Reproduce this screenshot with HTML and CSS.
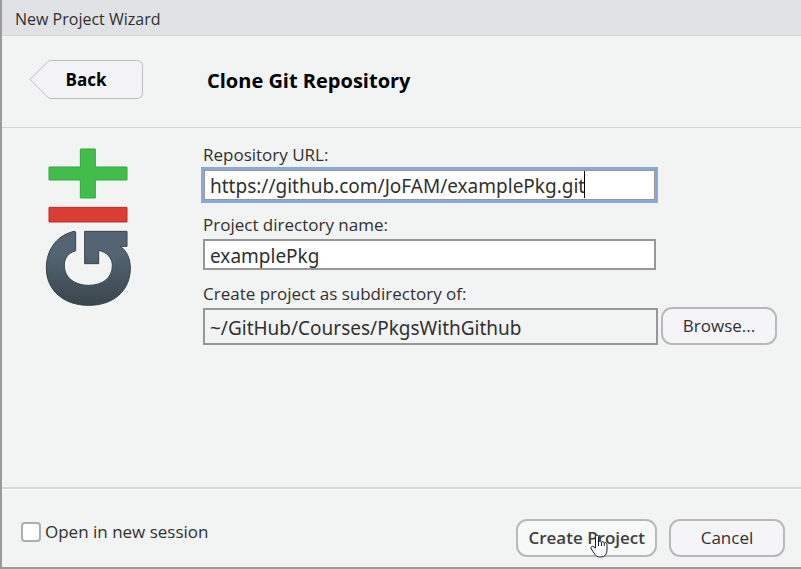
FILE: index.html
```html
<!DOCTYPE html>
<html lang="en">
<head>
<meta charset="utf-8">
<title>New Project Wizard</title>
<link rel="stylesheet" href="styles.css">
</head>
<body>
<form class="wizard">
  <div class="titlebar">New Project Wizard</div>
  <header class="header">
    <button type="button" class="back">
      <svg class="back-shape" viewBox="0 0 114 40" aria-hidden="true">
        <path d="M1 19.5 19 1.5Q20 .5 22 .5H107.500Q113.500 .5 113.500 6.500V32.500Q113.500 38.500 107.500 38.500H22Q20 38.500 19 37.500Z"/>
      </svg>
      <span class="back-label">Back</span>
    </button>
    <h1 class="heading">Clone Git Repository</h1>
  </header>
  <main class="content">
    <svg class="logo" viewBox="45 36 261 480" role="img" aria-label="Git">
      <defs>
        <linearGradient id="slate" x1="0" y1="0" x2="0" y2="1">
          <stop offset="0.3" stop-color="#546472"/>
          <stop offset="1" stop-color="#3a454d"/>
        </linearGradient>
      </defs>
      <path class="plus" d="M151 42H196V96H291V135H196V189H151V135H57V96H151Z"/>
      <path class="minus" d="M57 217H291V261H57Z"/>
      <path class="letter" fill="url(#slate)" d="M137 291C135 288 130 289 125 291C77 305 49 347 49 399C49 466 101 511 176 511C251 511 301 467 301 399C301 370 290 348 271 334H291V289H164V386H206V346C232 352 247 369 247 392C247 429 217 451 176 451C134 451 103 428 103 391C103 367 117 353 137 347Z"/>
    </svg>
    <div class="fields">
      <div class="field">
        <label for="url">Repository URL:</label>
        <div class="control">
          <input class="text active" id="url" type="text" value="https://github.com/JoFAM/examplePkg.git">
          <span class="caret"></span>
        </div>
      </div>
      <div class="field">
        <label for="name">Project directory name:</label>
        <div class="control">
          <input class="text" id="name" type="text" value="examplePkg">
        </div>
      </div>
      <div class="field">
        <label for="parent">Create project as subdirectory of:</label>
        <div class="browse-row">
          <input class="text tall" id="parent" type="text" value="~/GitHub/Courses/PkgsWithGithub" readonly>
          <button type="button" class="button">Browse...</button>
        </div>
      </div>
    </div>
  </main>
  <footer class="footer">
    <label class="session"><input type="checkbox" class="check">Open in new session</label>
    <div class="actions">
      <button type="button" class="button primary">Create Project
        <svg class="pointer" viewBox="0 0 18 24" aria-hidden="true">
          <path d="M5.500 14V2.500Q5.500 1 7 1T8.500 2.500V8Q9 6.800 10.200 7T11.500 8.500Q12 7.500 13 7.700T14.300 9.200Q15 8.300 16 8.700T17 10.500V16Q17 19 15.500 21T11 23H9.500Q6.500 23 5 20.500L1.300 15Q.5 13.500 1.500 12.700T4 13Z"/>
          <path d="M8.500 8V12M11.500 8.500V12M14.300 9.200V12"/>
        </svg>
      </button>
      <button type="button" class="button">Cancel</button>
    </div>
  </footer>
</form>
</body>
</html>
```
FILE: styles.css
```css
* {
  box-sizing: border-box;
}

body {
  margin: 0;
  background: #f2f4f4;
  color: #303030;
  font: 17px/24px "Open Sans", "Noto Sans", sans-serif;
}

.wizard {
  display: flex;
  flex-direction: column;
  min-height: 100vh;
  border-left: 2px solid #9a9a9a;
  border-bottom: 2px solid #9a9a9a;
}

.titlebar {
  height: 36px;
  padding: 0 13px;
  background: #e0e2e6;
  border-bottom: 1px solid #d4d6d9;
  font-size: 16px;
  line-height: 38px;
}

.header {
  display: flex;
  align-items: center;
  gap: 64px;
  height: 92px;
  padding: 0 27px 4px;
  border-bottom: 1px solid #d3d5d5;
}

.back {
  position: relative;
  width: 114px;
  height: 40px;
  padding: 0;
  border: 0;
  background: none;
  color: #000;
  font: bold 17px/40px "Open Sans", "Noto Sans", sans-serif;
}

.back-shape {
  position: absolute;
  inset: 0;
  fill: #f3f3f6;
  stroke: #bdbdbf;
}

.back-label {
  position: relative;
}

.heading {
  margin: 0;
  color: #000;
  font-size: 20px;
  line-height: 28px;
  padding-top: 2px;
}

.content {
  display: flex;
  flex: 1;
  align-items: flex-start;
  gap: 71px;
  padding: 15px 24px 15px 43px;
}

.logo {
  flex: none;
  width: 87px;
  height: 160px;
  margin-top: 4px;
  stroke-width: 3;
}

.plus {
  fill: #42bd4c;
  stroke: #2eab38;
}

.minus {
  fill: #d93d34;
  stroke: #bd2d26;
}

.letter {
  stroke: #38434c;
}

.fields {
  display: flex;
  flex: 1;
  flex-direction: column;
  gap: 12px;
}

.field label {
  display: block;
  padding-bottom: 2px;
  line-height: 24px;
}

.control {
  position: relative;
  margin-right: 121px;
}

.text {
  display: block;
  width: 100%;
  height: 31px;
  padding: 2px 5px 0;
  border: 2px solid #979797;
  border-radius: 0;
  outline: 0;
  background: #fff;
  color: #303030;
  font: 19px/25px "Noto Sans", "Open Sans", sans-serif;
}

.active {
  height: 32px;
  padding: 2px 6px 0;
  border: 1px solid #8aa8dc;
  box-shadow: inset 0 0 0 1px #979797, 0 0 0 2px #8aa8dc;
}

.caret {
  position: absolute;
  top: 2px;
  left: 381px;
  width: 1px;
  height: 27px;
  background: #000;
}

.browse-row {
  display: flex;
  align-items: flex-end;
  gap: 3px;
  margin-top: -1px;
}

.tall {
  flex: 1;
  height: 37px;
  background: #f2f4f4;
}

.button {
  position: relative;
  min-width: 116px;
  height: 38px;
  padding: 0 10px;
  border: 2px solid #b9b9bb;
  border-radius: 11px;
  background: #f5f5f8;
  color: #303030;
  font: 17px/34px "Open Sans", "Noto Sans", sans-serif;
}

.browse-row .button {
  align-self: flex-start;
}

.primary {
  background: #f7f9f9;
  color: #404040;
  font-weight: 600;
}

.pointer {
  position: absolute;
  top: 13px;
  left: 72px;
  width: 18px;
  height: 24px;
  fill: #fff;
  stroke: #1d1d30;
}

.footer {
  display: flex;
  align-items: center;
  justify-content: space-between;
  height: 80px;
  padding: 20px 16px 0 19px;
  border-top: 2px solid #d6d8d8;
  box-shadow: inset 0 1px #fff;
}

.session {
  display: flex;
  align-items: center;
  gap: 4px;
  padding-bottom: 12px;
}

.check {
  width: 20px;
  height: 20px;
  margin: 0;
  border: 2px solid #adadad;
  border-radius: 4px;
  appearance: none;
  background: #fff;
}

.actions {
  display: flex;
  gap: 12px;
}
```
